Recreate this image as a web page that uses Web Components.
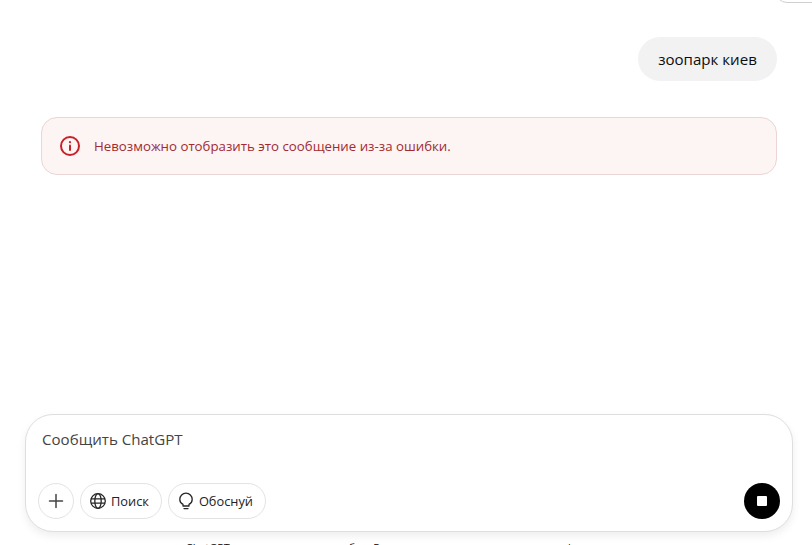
<!DOCTYPE html>
<html lang="ru">
<head>
  <meta charset="UTF-8">
  <meta name="viewport" content="width=device-width, initial-scale=1.0">
  <title>ChatGPT</title>
  <style>
    html, body {margin: 0; height: 545px; overflow: hidden; background: #fff;}
    body {font-family: "Open Sans", "Noto Sans", sans-serif; color: #0d0d0d;}
  </style>
</head>
<body>

<chat-page>
  <user-bubble slot="thread">зоопарк киев</user-bubble>
  <error-note slot="thread">Невозможно отобразить это сообщение из-за ошибки.</error-note>
  <chat-composer slot="composer" placeholder="Сообщить ChatGPT"></chat-composer>
  <span slot="disclaimer">ChatGPT может допускать ошибки. Рекомендуем проверять важную информацию.</span>
</chat-page>

<script>
  class ChatPage extends HTMLElement {
    constructor() {
      super();
      this.attachShadow({ mode: 'open' });
      this.shadowRoot.innerHTML = `
        <style>
          :host {display: flex; flex-direction: column; height: 545px; position: relative; overflow: hidden;}
          .corner {position: absolute; left: 775px; top: -30px; width: 60px; height: 33px; box-sizing: border-box; border: 1px solid #cfcfcf; border-radius: 12px;}
          .thread {flex: 1; display: flex; flex-direction: column; padding: 37px 35px 0 41px; gap: 36px;}
          .bottom {padding: 0 19px 0 25px;}
          .note {height: 5px; margin-top: 8px; text-align: center; font-size: 10.9px; line-height: 16px; color: #0d0d0d; white-space: nowrap;}
        </style>
        <div class="corner"></div>
        <div class="thread"><slot name="thread"></slot></div>
        <div class="bottom"><slot name="composer"></slot></div>
        <div class="note"><slot name="disclaimer"></slot></div>
      `;
    }
  }

  class UserBubble extends HTMLElement {
    constructor() {
      super();
      this.attachShadow({ mode: 'open' });
      this.shadowRoot.innerHTML = `
        <style>
          :host {display: block; align-self: flex-end; box-sizing: border-box; width: 139px; height: 44px; padding: 0; text-align: center; border-radius: 22px; background: #f2f2f2; font-size: 15.1px; line-height: 44px; color: #0d0d0d;}
        </style>
        <slot></slot>
      `;
    }
  }

  class ErrorNote extends HTMLElement {
    constructor() {
      super();
      this.attachShadow({ mode: 'open' });
      this.shadowRoot.innerHTML = `
        <style>
          :host {display: flex; align-items: center; gap: 13px; box-sizing: border-box; height: 58px; padding: 0 17px; border: 1px solid #ebd5d5; border-radius: 16px; background: #fdf4f4; font-size: 13.25px; color: #a32a30;}
          svg {flex: none; width: 22px; height: 22px;}
        </style>
        <svg viewBox="0 0 22 22" fill="none" stroke="#c8202b" stroke-width="2" stroke-linecap="round">
          <circle cx="11" cy="11" r="9"/>
          <path d="M11 10.5v4.5"/>
          <circle cx="11" cy="7.2" r="1.1" fill="#c8202b" stroke="none"/>
        </svg>
        <span><slot></slot></span>
      `;
    }
  }

  class PillButton extends HTMLElement {
    constructor() {
      super();
      this.attachShadow({ mode: 'open' });
      this.shadowRoot.innerHTML = `
        <style>
          :host {display: inline-flex; align-items: center; gap: 4px; box-sizing: border-box; height: 36px; padding: 0 12px 0 8px; border: 1px solid #e3e3e3; border-radius: 18px; font-size: 12.8px; color: #222; background: #fff;}
          :host([round]) {width: 36px; padding: 0; justify-content: center;}
        </style>
        <slot name="icon"></slot><slot></slot>
      `;
    }
  }

  class ChatComposer extends HTMLElement {
    constructor() {
      super();
      this.attachShadow({ mode: 'open' });
      this.shadowRoot.innerHTML = `
        <style>
          :host {display: flex; flex-direction: column; justify-content: space-between; box-sizing: border-box; height: 118px; padding: 13px 12px 12px 12px; border: 1px solid #dedede; border-radius: 28px; background: #fff; box-shadow: 0 4px 8px rgba(0,0,0,.07);}
          .placeholder {padding-left: 4px; font-size: 15.1px; line-height: 22px; color: #444;}
          .row {display: flex; align-items: center; gap: 6px;}
          .stop {margin-left: auto; width: 36px; height: 36px; border-radius: 50%; background: #000; display: flex; align-items: center; justify-content: center;}
          .stop i {display: block; width: 10px; height: 10px; background: #fff; border-radius: 1px;}
          svg {display: block; fill: none; stroke: #262626;}
        </style>
        <div class="placeholder"></div>
        <div class="row">
          <pill-button round>
            <svg slot="icon" width="18" height="18" viewBox="0 0 18 18" stroke-width="1.5" stroke-linecap="round" style="stroke:#444"><path d="M9 2.5v13M2.5 9h13"/></svg>
          </pill-button>
          <pill-button>
            <svg slot="icon" width="18" height="18" viewBox="0 0 18 18" stroke-width="1.3"><circle cx="9" cy="9" r="7.3"/><ellipse cx="9" cy="9" rx="3.2" ry="7.3"/><path d="M2 6.8h14M2 11.2h14"/></svg>
            Поиск
          </pill-button>
          <pill-button>
            <svg slot="icon" width="18" height="18" viewBox="0 0 18 18" stroke-width="1.3" stroke-linecap="round" stroke-linejoin="round"><path d="M6 12.4C4 11.3 2.8 9.5 2.8 7.4a6.2 6.2 0 0 1 12.4 0c0 2.1-1.2 3.9-3.2 5v1.6H6z"/><path d="M7 16.6h4"/></svg>
            Обоснуй
          </pill-button>
          <div class="stop"><i></i></div>
        </div>
      `;
      this.shadowRoot.querySelector('.placeholder').textContent = this.getAttribute('placeholder');
    }
  }

  customElements.define('chat-page', ChatPage);
  customElements.define('user-bubble', UserBubble);
  customElements.define('error-note', ErrorNote);
  customElements.define('pill-button', PillButton);
  customElements.define('chat-composer', ChatComposer);
</script>

</body>
</html>
